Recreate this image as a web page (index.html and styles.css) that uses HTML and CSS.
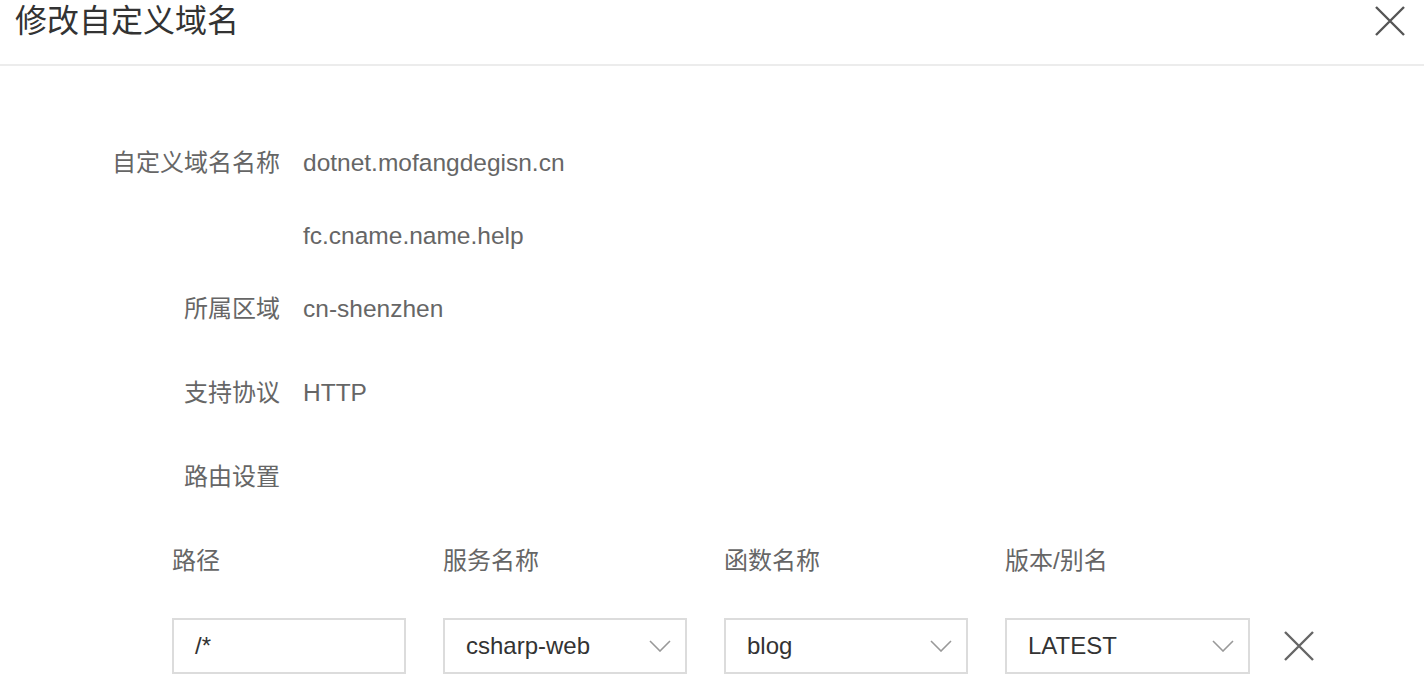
FILE: index.html
```html
<!DOCTYPE html>
<html lang="zh-CN">
<head>
    <meta charset="UTF-8">
    <title>修改自定义域名</title>
    <link rel="stylesheet" href="styles.css">
</head>
<body>
    <div class="dialog">
        <div class="dialog-header">
            <h1 class="dialog-title">修改自定义域名</h1>
            <button class="dialog-close" aria-label="关闭">
                <svg width="30" height="30" viewBox="0 0 30 30"><path d="M1 1L29 29M29 1L1 29" stroke="#555" stroke-width="2.4" fill="none"/></svg>
            </button>
        </div>

        <div class="dialog-body">
            <div class="field">
                <span class="field-label">自定义域名名称</span>
                <span class="field-value">dotnet.mofangdegisn.cn</span>
            </div>
            <div class="field">
                <span class="field-label"></span>
                <span class="field-value">fc.cname.name.help</span>
            </div>
            <div class="field">
                <span class="field-label">所属区域</span>
                <span class="field-value">cn-shenzhen</span>
            </div>
            <div class="field field-wide">
                <span class="field-label">支持协议</span>
                <span class="field-value">HTTP</span>
            </div>
            <div class="field field-wide">
                <span class="field-label">路由设置</span>
            </div>

            <div class="routes">
                <div class="routes-head">路径</div>
                <div class="routes-head">服务名称</div>
                <div class="routes-head">函数名称</div>
                <div class="routes-head">版本/别名</div>
                <div></div>

                <div class="input">/*</div>
                <div class="select">
                    <span>csharp-web</span>
                    <svg width="22" height="12" viewBox="0 0 22 12"><path d="M1 1L11 11L21 1" stroke="#999" stroke-width="1.6" fill="none"/></svg>
                </div>
                <div class="select">
                    <span>blog</span>
                    <svg width="22" height="12" viewBox="0 0 22 12"><path d="M1 1L11 11L21 1" stroke="#999" stroke-width="1.6" fill="none"/></svg>
                </div>
                <div class="select">
                    <span>LATEST</span>
                    <svg width="22" height="12" viewBox="0 0 22 12"><path d="M1 1L11 11L21 1" stroke="#999" stroke-width="1.6" fill="none"/></svg>
                </div>
                <button class="route-remove" aria-label="删除">
                    <svg width="30" height="30" viewBox="0 0 30 30"><path d="M1 1L29 29M29 1L1 29" stroke="#666" stroke-width="2.4" fill="none"/></svg>
                </button>
            </div>
        </div>
    </div>
</body>
</html>
```

FILE: styles.css
```css
html, body {
    margin: 0;
    padding: 0;
    background: #fff;
    color: #333;
    font-family: 'Liberation Sans', 'Noto Sans CJK SC', sans-serif;
}

button {
    background: none;
    border: none;
    padding: 0;
    cursor: pointer;
}

.dialog-header {
    display: flex;
    justify-content: space-between;
    align-items: flex-start;
    height: 64px;
    padding: 0 19px 0 15px;
    border-bottom: 2px solid #ececec;
}

.dialog-title {
    margin: 0;
    font-size: 32px;
    font-weight: normal;
    line-height: 42px;
    color: #333;
}

.dialog-close {
    margin-top: 6px;
    display: block;
}

.dialog-close svg,
.route-remove svg {
    display: block;
}

.dialog-body {
    display: flex;
    flex-direction: column;
    padding-top: 82px;
}

.field {
    display: flex;
    align-items: baseline;
    gap: 23px;
    height: 30px;
    line-height: 30px;
    margin-bottom: 43px;
    font-size: 24px;
    color: #666;
}

.field-wide {
    margin-top: 11px;
}

.field-label {
    width: 280px;
    text-align: right;
}

.field-value {
    color: #666;
    font-size: 24.5px;
}

.routes {
    display: grid;
    grid-template-columns: 234px 244px 244px 245px 30px;
    column-gap: 37px;
    row-gap: 42px;
    align-items: center;
    margin-top: 11px;
    padding-left: 172px;
}

.routes-head {
    font-size: 24px;
    line-height: 30px;
    color: #666;
}

.input,
.select {
    box-sizing: border-box;
    height: 56px;
    border: 2px solid #dcdcdc;
    padding: 0 14px 0 21px;
    font-size: 24px;
    color: #333;
    display: flex;
    align-items: center;
}

.select {
    justify-content: space-between;
}

.route-remove {
    display: block;
    margin-left: -3px;
}
```
